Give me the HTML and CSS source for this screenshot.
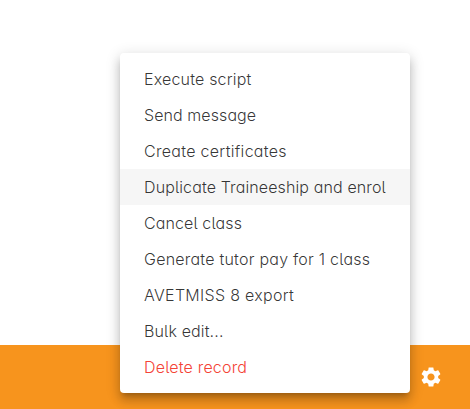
FILE: index.html
```html
<!DOCTYPE html>
<html lang="en">
<head>
<meta charset="utf-8">
<title>Actions</title>
<link rel="stylesheet" href="styles.css">
</head>
<body>
<main class="page">
  <footer class="bar">
    <button class="settings" aria-label="Settings"><svg viewBox="0 0 24 24"><path d="M19.14 12.94c.04-.3.06-.61.06-.94 0-.32-.02-.64-.07-.94l2.03-1.58c.18-.14.23-.41.12-.61l-1.92-3.32c-.12-.22-.37-.29-.59-.22l-2.39.96c-.5-.38-1.03-.7-1.62-.94l-.36-2.54c-.04-.24-.24-.41-.48-.41h-3.84c-.24 0-.43.17-.47.41l-.36 2.54c-.59.24-1.13.57-1.62.94l-2.39-.96c-.22-.08-.47 0-.59.22L2.74 8.87c-.12.21-.08.47.12.61l2.03 1.58c-.05.3-.09.63-.09.94s.02.64.07.94l-2.03 1.58c-.18.14-.23.41-.12.61l1.92 3.32c.12.22.37.29.59.22l2.39-.96c.5.38 1.03.7 1.62.94l.36 2.54c.05.24.24.41.48.41h3.84c.24 0 .44-.17.47-.41l.36-2.54c.59-.24 1.13-.56 1.62-.94l2.39.96c.22.08.47 0 .59-.22l1.92-3.32c.12-.22.07-.47-.12-.61l-2.01-1.58zM12 15.6c-1.98 0-3.6-1.62-3.6-3.6s1.62-3.6 3.6-3.6 3.6 1.62 3.6 3.6-1.62 3.6-3.6 3.6z"/></svg></button>
  </footer>
  <ul class="menu">
    <li class="item"><span class="t1">Execute script</span></li>
    <li class="item"><span class="t2">Send message</span></li>
    <li class="item"><span class="t3">Create certificates</span></li>
    <li class="item active"><span class="t4">Duplicate Traineeship and enrol</span></li>
    <li class="item"><span class="t5">Cancel class</span></li>
    <li class="item"><span class="t6">Generate tutor pay for 1 class</span></li>
    <li class="item"><span class="t7">AVETMISS 8 export</span></li>
    <li class="item"><span class="t8">Bulk edit...</span></li>
    <li class="item danger"><span class="t9">Delete record</span></li>
  </ul>
</main>
</body>
</html>
```
FILE: styles.css
```css
body { margin: 0; font-family: Inter, sans-serif; }
.page { position: relative; display: flex; flex-direction: column; justify-content: flex-end; height: 409px; overflow: hidden; background: #fff; }
.bar { display: flex; align-items: center; justify-content: flex-end; height: 64px; box-sizing: border-box; padding-right: 27px; background: #f7941d; }
.settings { display: flex; padding: 0; border: 0; background: none; color: #fff; }
.settings svg { width: 24px; height: 24px; fill: currentColor; }
.menu { position: absolute; left: 120px; top: 53px; width: 290px; height: 340px; box-sizing: border-box; margin: 0; padding: 8px 0; list-style: none; border-radius: 4px; background: #fff; box-shadow: 0 5px 5px -3px rgba(0,0,0,.2), 0 8px 10px 1px rgba(0,0,0,.14), 0 3px 14px 2px rgba(0,0,0,.12); }
.item { height: 36px; padding: 0 24px; font-size: 16px; font-weight: 320; line-height: 36px; white-space: nowrap; color: rgba(0,0,0,.8); font-feature-settings: "cv11", "cv05"; }
.active { background: #f6f6f6; }
.danger { color: #f44336; }
.t1 { letter-spacing: .18px; }
.t2 { letter-spacing: .08px; }
.t3 { letter-spacing: .3px; }
.t4 { letter-spacing: .12px; }
.t5 { letter-spacing: .11px; }
.t6 { letter-spacing: .23px; }
.t7 { letter-spacing: .3px; }
.t8 { letter-spacing: .14px; }
.t9 { letter-spacing: .18px; }
```
